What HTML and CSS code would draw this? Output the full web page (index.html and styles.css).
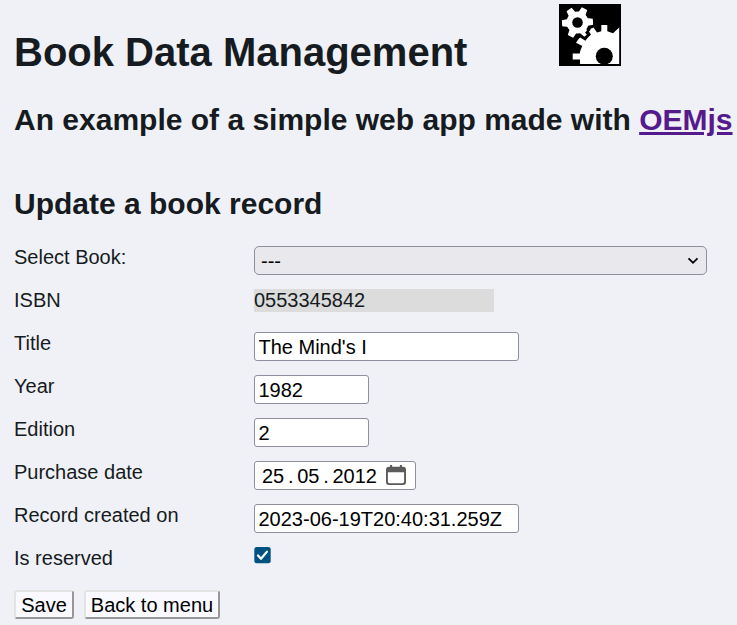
FILE: index.html
```html
<!DOCTYPE html>
<html lang="en">
<head>
<meta charset="utf-8">
<title>Book Data Management</title>
<link rel="stylesheet" href="styles.css">
</head>
<body>
<header class="banner">
  <h1>Book Data Management</h1>
  <svg class="logo" viewBox="0 0 62 62" aria-hidden="true">
    <rect width="62" height="62"/>
    <g fill="#fff">
      <path d="M21 60V55.500h-7.300v-6H20.700A25 25 0 0 1 23.300 42L17 38.700l3.800-5.400 5.600 3.400A25 25 0 0 1 32 30.500L29 26l5.500-2.500 3.500 5L42.300 27.300V21h6v6.300L54 29.300 60.200 23.500V60z"/>
      <circle cx="18.500" cy="18.500" r="11"/>
      <g transform="translate(18.500 18.500) rotate(-3)">
        <path id="tooth" d="M9-4 15.500-3v6L9 4z"/>
        <use href="#tooth" transform="rotate(60)"/><use href="#tooth" transform="rotate(120)"/>
        <use href="#tooth" transform="rotate(180)"/><use href="#tooth" transform="rotate(240)"/>
        <use href="#tooth" transform="rotate(300)"/>
      </g>
    </g>
    <path d="M19 34l2.500-3 4.500 3.500 3.500-3.500-2-2.500 3.500-3.500" fill="none" stroke="#000" stroke-width="2.200"/>
    <circle cx="18.500" cy="18.500" r="5.300"/>
    <circle cx="45.300" cy="52.300" r="8.500"/>
    <rect x="14" y="60" width="48" height="2"/>
  </svg>
</header>
<h2>An example of a simple web app made with <a href="#">OEMjs</a></h2>
<main>
  <h2 class="section-title">Update a book record</h2>
  <form class="record">
    <label for="book">Select Book:</label>
    <div class="field select-box"><select id="book"><option>---</option></select>
      <svg class="chevron" viewBox="0 0 12 8" aria-hidden="true"><path d="M1.500 1.300 6 5.800l4.500-4.500"/></svg></div>
    <label>ISBN</label>
    <output>0553345842</output>
    <label for="title">Title</label>
    <input class="field text" id="title" value="The Mind's I">
    <label for="year">Year</label>
    <input class="field short" id="year" value="1982">
    <label for="edition">Edition</label>
    <input class="field short" id="edition" value="2">
    <label>Purchase date</label>
    <div class="field date">
      <span>25</span><span class="dot">.</span><span>05</span><span class="dot">.</span><span>2012</span>
      <svg class="calendar" viewBox="0 0 20 20" aria-hidden="true"><path d="M3 1.700H4V1a1 1 0 0 1 2.200 0v.700h7.600V1A1 1 0 0 1 16 1v.700h1a3 3 0 0 1 3 3V17a3 3 0 0 1-3 3H3a3 3 0 0 1-3-3V4.700a3 3 0 0 1 3-3zM1.900 7.200V16.600q0 1.600 1.600 1.600h13q1.600 0 1.600-1.600V7.200z"/></svg>
    </div>
    <label for="created">Record created on</label>
    <input class="field text" id="created" value="2023-06-19T20:40:31.259Z">
    <label>Is reserved</label>
    <svg class="check" viewBox="0 0 17 17" role="img" aria-label="checked"><rect x=".3" width="16.400" height="16.300" rx="2.500"/><path d="M4 8.500l3 3.300L13 4.600"/></svg>
  </form>
  <div class="actions"><button type="button" class="save">Save</button><button type="button" class="back">Back to menu</button></div>
</main>
</body>
</html>
```

FILE: styles.css
```css
* { box-sizing: border-box; }
body {
  margin: 0;
  padding: 4px 0 0 14px;
  height: 625px;
  overflow: hidden;
  background: #f0f1f6;
  color: #151b21;
  font: 20px/23px "Liberation Sans", Arial, sans-serif;
}
.banner { display: flex; height: 99px; }
h1 { width: 545px; margin: 25px 0 0; font-size: 40px; line-height: 46px; }
.logo { width: 62px; height: 62px; }
h2 { margin: 0; font-size: 30px; line-height: 34px; white-space: nowrap; }
h2 a { color: #551a8b; }
.section-title { margin-top: 50px; }
.record {
  display: grid;
  grid-template-columns: 240px 453px;
  grid-template-rows: repeat(8, 29px);
  row-gap: 14px;
  align-items: start;
  margin-top: 25px;
}
.field {
  height: 29px;
  border: 1px solid #8f8f9d;
  border-radius: 3px;
  background: #fff;
  color: #000;
  font: inherit;
  padding: 1px 3.5px 0;
}
.select-box { display: flex; align-items: center; border-radius: 5px; background: #e9e8ed; padding: 0 7px 0 6px; }
.select-box select { flex: 1; appearance: none; border: 0; padding: 2px 0 0; background: none; color: #000; font: inherit; }
.chevron { width: 12px; height: 8px; fill: none; stroke: #000; stroke-width: 1.8; }
output { width: 240px; height: 23px; background: #dcdcdc; }
.text { width: 265px; }
.short { width: 115px; }
.date { display: flex; align-items: center; width: 162px; padding: 1px 0 0 7px; }
.dot { width: 13px; text-align: center; }
.calendar { width: 20px; height: 20px; margin: -2px 0 0 9px; fill: #5b5b5b; fill-rule: evenodd; }
.check { width: 17px; height: 17px; fill: #005380; }
.check path { fill: none; stroke: #fff; stroke-width: 2.2; stroke-linecap: round; stroke-linejoin: round; }
.actions { display: flex; gap: 10px; margin-top: 14px; }
button {
  height: 29px;
  padding: 1px 0 0;
  border: 2px solid;
  border-color: #e3e3e3 #979797 #979797 #e3e3e3;
  border-radius: 3px;
  background: #f9f9ff;
  color: #000;
  font: inherit;
}
.save { width: 60px; }
.back { width: 136px; }
```
